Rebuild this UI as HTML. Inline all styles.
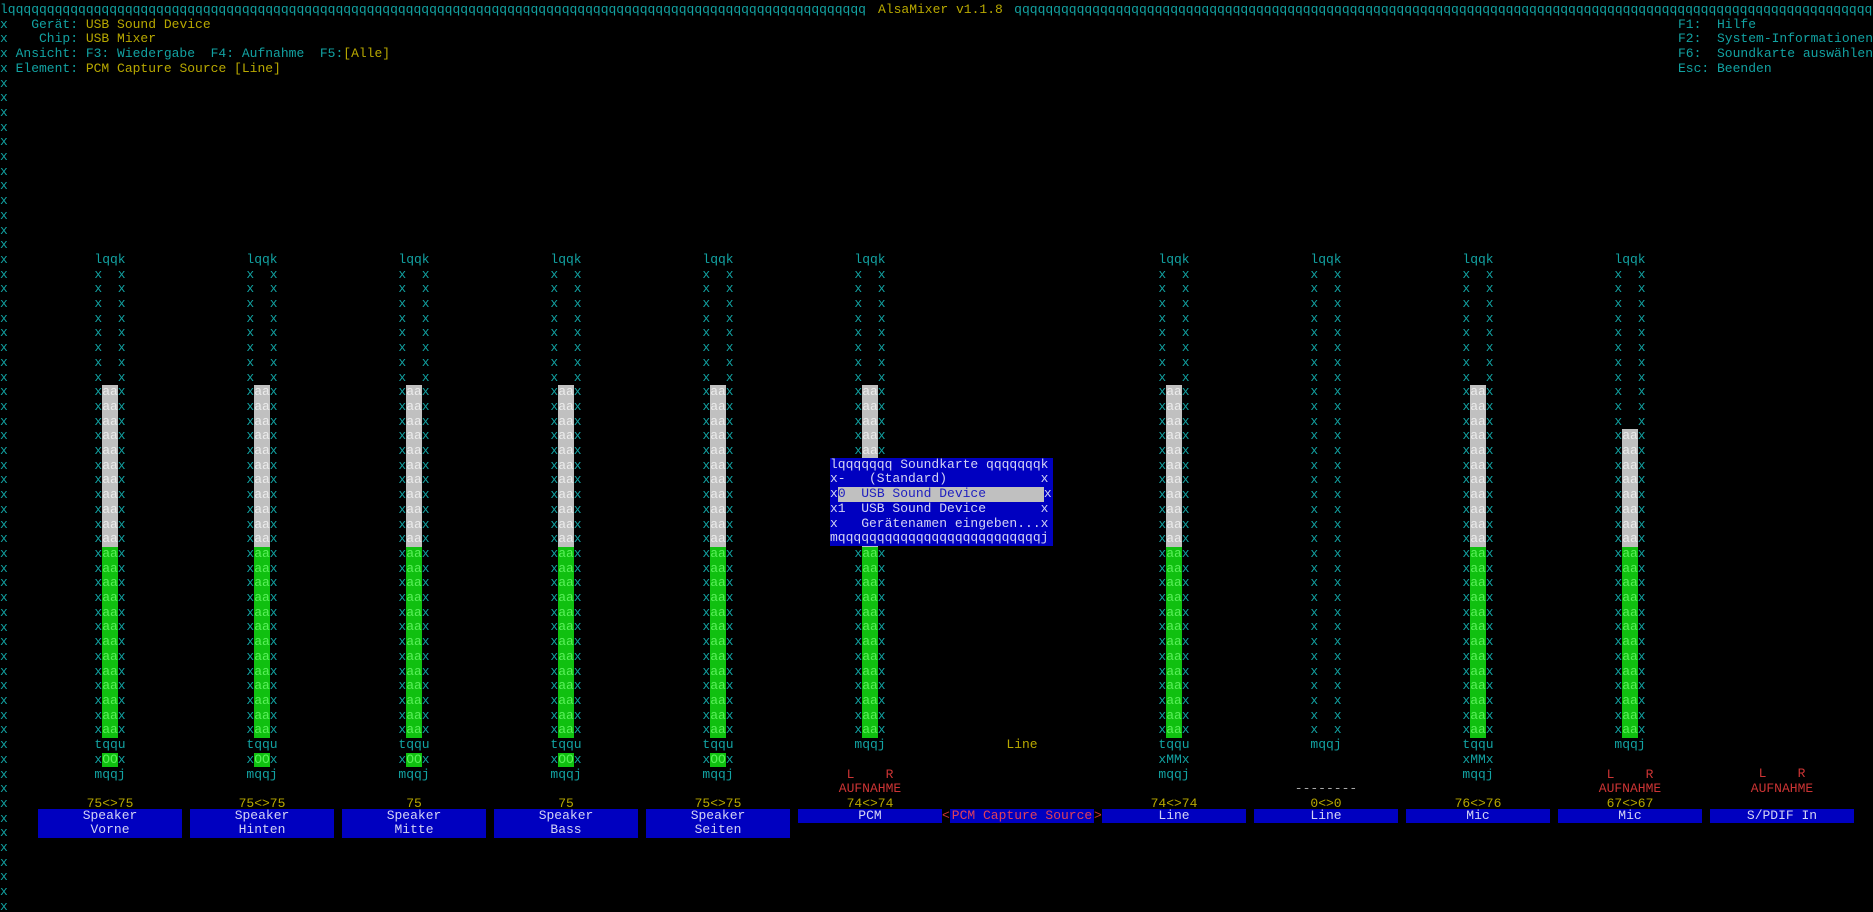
<!DOCTYPE html>
<html><head><meta charset="utf-8">
<style>
html,body{margin:0;padding:0;background:#000;width:1873px;height:912px;overflow:hidden;position:relative}
pre{margin:0;font-family:"Liberation Mono",monospace;font-size:13px;line-height:14.7px;position:absolute;white-space:pre;transform:translateY(3px)}
.c{color:#12a2a2}.y{color:#b8a800}.r{color:#cc3434}.k{color:#12a2a2}
.ctl{top:249.9px;width:144px;text-align:center;color:#12a2a2}
b{font-weight:normal;display:inline-block;height:14.7px;vertical-align:top}
.w{background:#c0c0c0;color:#ececec}
.G{background:#10c010;color:#5af05a}
.box{position:absolute;top:808.5px;width:144px;height:14.7px;background:#0000c0;color:#d4d4f4;font-family:"Liberation Mono",monospace;font-size:13px;line-height:14.7px;text-align:center;white-space:pre}
.box2{height:29.4px}
.lab{position:absolute;width:144px;text-align:center;font-family:"Liberation Mono",monospace;font-size:13px;line-height:14.7px;white-space:pre}
#menu{left:830px;top:455.7px;width:223px;height:88.2px;background:#0000c0;color:#d4d4f4;z-index:5;transform:translateY(2px)}
.hl{background:#c0c0c0;color:#2020c0;display:inline-block;width:206px}
</style></head><body>
<pre class="c" style="left:0;top:0;width:1873px;overflow:hidden">lqqqqqqqqqqqqqqqqqqqqqqqqqqqqqqqqqqqqqqqqqqqqqqqqqqqqqqqqqqqqqqqqqqqqqqqqqqqqqqqqqqqqqqqqqqqqqqqqqqqqqqqqqqqqqqqqqqqqqqqqqqqqqqqqqqqqqqqqqqqqqqqqqqqqqqqqqqqqqqqqqqqqqqqqqqqqqqqqqqqqqqqqqqqqqqqqqqqqqqqqqqqqqqqqqqqqqqqqqqqqqqqqqqqqqqqqqqqqqqqqqqqqqq
x   Gerät: <span class="y">USB Sound Device</span>
x    Chip: <span class="y">USB Mixer</span>
x Ansicht: F3: Wiedergabe  F4: Aufnahme  F5:<span class="y">[Alle]</span>
x Element: <span class="y">PCM Capture Source [Line]</span></pre>
<pre class="y" style="left:866.2px;top:0;background:#000;padding-left:4px;padding-right:3.9px"> AlsaMixer v1.1.8 </pre>
<pre class="c" style="left:1678px;top:14.7px">F1:  Hilfe
F2:  System-Informationen
F6:  Soundkarte auswählen
Esc: Beenden</pre>
<pre class="c" style="left:0;top:73.5px">x
x
x
x
x
x
x
x
x
x
x
x
x
x
x
x
x
x
x
x
x
x
x
x
x
x
x
x
x
x
x
x
x
x
x
x
x
x
x
x
x
x
x
x
x
x
x
x
x
x
x
x
x
x
x
x
x</pre>

<pre class="ctl" style="left:38px">lqqk
x  x
x  x
x  x
x  x
x  x
x  x
x  x
x  x
x<b class="w">aa</b>x
x<b class="w">aa</b>x
x<b class="w">aa</b>x
x<b class="w">aa</b>x
x<b class="w">aa</b>x
x<b class="w">aa</b>x
x<b class="w">aa</b>x
x<b class="w">aa</b>x
x<b class="w">aa</b>x
x<b class="w">aa</b>x
x<b class="w">aa</b>x
x<b class="G">aa</b>x
x<b class="G">aa</b>x
x<b class="G">aa</b>x
x<b class="G">aa</b>x
x<b class="G">aa</b>x
x<b class="G">aa</b>x
x<b class="G">aa</b>x
x<b class="G">aa</b>x
x<b class="G">aa</b>x
x<b class="G">aa</b>x
x<b class="G">aa</b>x
x<b class="G">aa</b>x
x<b class="G">aa</b>x
tqqu
x<b class="G">OO</b>x
mqqj

<span class="y">75&lt;&gt;75</span></pre>
<pre class="ctl" style="left:190px">lqqk
x  x
x  x
x  x
x  x
x  x
x  x
x  x
x  x
x<b class="w">aa</b>x
x<b class="w">aa</b>x
x<b class="w">aa</b>x
x<b class="w">aa</b>x
x<b class="w">aa</b>x
x<b class="w">aa</b>x
x<b class="w">aa</b>x
x<b class="w">aa</b>x
x<b class="w">aa</b>x
x<b class="w">aa</b>x
x<b class="w">aa</b>x
x<b class="G">aa</b>x
x<b class="G">aa</b>x
x<b class="G">aa</b>x
x<b class="G">aa</b>x
x<b class="G">aa</b>x
x<b class="G">aa</b>x
x<b class="G">aa</b>x
x<b class="G">aa</b>x
x<b class="G">aa</b>x
x<b class="G">aa</b>x
x<b class="G">aa</b>x
x<b class="G">aa</b>x
x<b class="G">aa</b>x
tqqu
x<b class="G">OO</b>x
mqqj

<span class="y">75&lt;&gt;75</span></pre>
<pre class="ctl" style="left:342px">lqqk
x  x
x  x
x  x
x  x
x  x
x  x
x  x
x  x
x<b class="w">aa</b>x
x<b class="w">aa</b>x
x<b class="w">aa</b>x
x<b class="w">aa</b>x
x<b class="w">aa</b>x
x<b class="w">aa</b>x
x<b class="w">aa</b>x
x<b class="w">aa</b>x
x<b class="w">aa</b>x
x<b class="w">aa</b>x
x<b class="w">aa</b>x
x<b class="G">aa</b>x
x<b class="G">aa</b>x
x<b class="G">aa</b>x
x<b class="G">aa</b>x
x<b class="G">aa</b>x
x<b class="G">aa</b>x
x<b class="G">aa</b>x
x<b class="G">aa</b>x
x<b class="G">aa</b>x
x<b class="G">aa</b>x
x<b class="G">aa</b>x
x<b class="G">aa</b>x
x<b class="G">aa</b>x
tqqu
x<b class="G">OO</b>x
mqqj

<span class="y">75</span></pre>
<pre class="ctl" style="left:494px">lqqk
x  x
x  x
x  x
x  x
x  x
x  x
x  x
x  x
x<b class="w">aa</b>x
x<b class="w">aa</b>x
x<b class="w">aa</b>x
x<b class="w">aa</b>x
x<b class="w">aa</b>x
x<b class="w">aa</b>x
x<b class="w">aa</b>x
x<b class="w">aa</b>x
x<b class="w">aa</b>x
x<b class="w">aa</b>x
x<b class="w">aa</b>x
x<b class="G">aa</b>x
x<b class="G">aa</b>x
x<b class="G">aa</b>x
x<b class="G">aa</b>x
x<b class="G">aa</b>x
x<b class="G">aa</b>x
x<b class="G">aa</b>x
x<b class="G">aa</b>x
x<b class="G">aa</b>x
x<b class="G">aa</b>x
x<b class="G">aa</b>x
x<b class="G">aa</b>x
x<b class="G">aa</b>x
tqqu
x<b class="G">OO</b>x
mqqj

<span class="y">75</span></pre>
<pre class="ctl" style="left:646px">lqqk
x  x
x  x
x  x
x  x
x  x
x  x
x  x
x  x
x<b class="w">aa</b>x
x<b class="w">aa</b>x
x<b class="w">aa</b>x
x<b class="w">aa</b>x
x<b class="w">aa</b>x
x<b class="w">aa</b>x
x<b class="w">aa</b>x
x<b class="w">aa</b>x
x<b class="w">aa</b>x
x<b class="w">aa</b>x
x<b class="w">aa</b>x
x<b class="G">aa</b>x
x<b class="G">aa</b>x
x<b class="G">aa</b>x
x<b class="G">aa</b>x
x<b class="G">aa</b>x
x<b class="G">aa</b>x
x<b class="G">aa</b>x
x<b class="G">aa</b>x
x<b class="G">aa</b>x
x<b class="G">aa</b>x
x<b class="G">aa</b>x
x<b class="G">aa</b>x
x<b class="G">aa</b>x
tqqu
x<b class="G">OO</b>x
mqqj

<span class="y">75&lt;&gt;75</span></pre>

<pre class="ctl" style="left:798px">lqqk
x  x
x  x
x  x
x  x
x  x
x  x
x  x
x  x
x<b class="w">aa</b>x
x<b class="w">aa</b>x
x<b class="w">aa</b>x
x<b class="w">aa</b>x
x<b class="w">aa</b>x
x<b class="w">aa</b>x
x<b class="w">aa</b>x
x<b class="w">aa</b>x
x<b class="w">aa</b>x
x<b class="w">aa</b>x
x<b class="w">aa</b>x
x<b class="G">aa</b>x
x<b class="G">aa</b>x
x<b class="G">aa</b>x
x<b class="G">aa</b>x
x<b class="G">aa</b>x
x<b class="G">aa</b>x
x<b class="G">aa</b>x
x<b class="G">aa</b>x
x<b class="G">aa</b>x
x<b class="G">aa</b>x
x<b class="G">aa</b>x
x<b class="G">aa</b>x
x<b class="G">aa</b>x
mqqj

<span class="r">L    R</span>
<span class="r">AUFNAHME</span>
<span class="y">74&lt;&gt;74</span></pre>

<div class="lab y" style="left:950px;top:738px">Line</div>

<pre class="ctl" style="left:1102px">lqqk
x  x
x  x
x  x
x  x
x  x
x  x
x  x
x  x
x<b class="w">aa</b>x
x<b class="w">aa</b>x
x<b class="w">aa</b>x
x<b class="w">aa</b>x
x<b class="w">aa</b>x
x<b class="w">aa</b>x
x<b class="w">aa</b>x
x<b class="w">aa</b>x
x<b class="w">aa</b>x
x<b class="w">aa</b>x
x<b class="w">aa</b>x
x<b class="G">aa</b>x
x<b class="G">aa</b>x
x<b class="G">aa</b>x
x<b class="G">aa</b>x
x<b class="G">aa</b>x
x<b class="G">aa</b>x
x<b class="G">aa</b>x
x<b class="G">aa</b>x
x<b class="G">aa</b>x
x<b class="G">aa</b>x
x<b class="G">aa</b>x
x<b class="G">aa</b>x
x<b class="G">aa</b>x
tqqu
xMMx
mqqj

<span class="y">74&lt;&gt;74</span></pre>

<pre class="ctl" style="left:1254px">lqqk
x  x
x  x
x  x
x  x
x  x
x  x
x  x
x  x
x  x
x  x
x  x
x  x
x  x
x  x
x  x
x  x
x  x
x  x
x  x
x  x
x  x
x  x
x  x
x  x
x  x
x  x
x  x
x  x
x  x
x  x
x  x
x  x
mqqj


<span style="color:#a8a8a8">--------</span>
<span class="y">0&lt;&gt;0</span></pre>

<pre class="ctl" style="left:1406px">lqqk
x  x
x  x
x  x
x  x
x  x
x  x
x  x
x  x
x<b class="w">aa</b>x
x<b class="w">aa</b>x
x<b class="w">aa</b>x
x<b class="w">aa</b>x
x<b class="w">aa</b>x
x<b class="w">aa</b>x
x<b class="w">aa</b>x
x<b class="w">aa</b>x
x<b class="w">aa</b>x
x<b class="w">aa</b>x
x<b class="w">aa</b>x
x<b class="G">aa</b>x
x<b class="G">aa</b>x
x<b class="G">aa</b>x
x<b class="G">aa</b>x
x<b class="G">aa</b>x
x<b class="G">aa</b>x
x<b class="G">aa</b>x
x<b class="G">aa</b>x
x<b class="G">aa</b>x
x<b class="G">aa</b>x
x<b class="G">aa</b>x
x<b class="G">aa</b>x
x<b class="G">aa</b>x
tqqu
xMMx
mqqj

<span class="y">76&lt;&gt;76</span></pre>

<pre class="ctl" style="left:1558px">lqqk
x  x
x  x
x  x
x  x
x  x
x  x
x  x
x  x
x  x
x  x
x  x
x<b class="w">aa</b>x
x<b class="w">aa</b>x
x<b class="w">aa</b>x
x<b class="w">aa</b>x
x<b class="w">aa</b>x
x<b class="w">aa</b>x
x<b class="w">aa</b>x
x<b class="w">aa</b>x
x<b class="G">aa</b>x
x<b class="G">aa</b>x
x<b class="G">aa</b>x
x<b class="G">aa</b>x
x<b class="G">aa</b>x
x<b class="G">aa</b>x
x<b class="G">aa</b>x
x<b class="G">aa</b>x
x<b class="G">aa</b>x
x<b class="G">aa</b>x
x<b class="G">aa</b>x
x<b class="G">aa</b>x
x<b class="G">aa</b>x
mqqj

<span class="r">L    R</span>
<span class="r">AUFNAHME</span>
<span class="y">67&lt;&gt;67</span></pre>

<pre class="ctl" style="left:1710px;top:764.4px"><span class="r">L    R</span>
<span class="r">AUFNAHME</span></pre>

<div class="box box2" style="left:38px">Speaker
Vorne</div>
<div class="box box2" style="left:190px">Speaker
Hinten</div>
<div class="box box2" style="left:342px">Speaker
Mitte</div>
<div class="box box2" style="left:494px">Speaker
Bass</div>
<div class="box box2" style="left:646px">Speaker
Seiten</div>
<div class="box" style="left:798px">PCM</div>
<div class="box" style="left:950px;color:#e0405a">PCM Capture Source</div>
<div class="lab r" style="left:942px;width:8px;top:808.5px;text-align:left">&lt;</div>
<div class="lab r" style="left:1094px;width:8px;top:808.5px;text-align:left">&gt;</div>
<div class="box" style="left:1102px">Line</div>
<div class="box" style="left:1254px">Line</div>
<div class="box" style="left:1406px">Mic</div>
<div class="box" style="left:1558px">Mic</div>
<div class="box" style="left:1710px">S/PDIF In</div>

<pre id="menu">lqqqqqqq Soundkarte qqqqqqqk
x-   (Standard)            x
x<span class="hl">0  USB Sound Device</span>x
x1  USB Sound Device       x
x   Gerätenamen eingeben...x
mqqqqqqqqqqqqqqqqqqqqqqqqqqj</pre>
</body></html>
